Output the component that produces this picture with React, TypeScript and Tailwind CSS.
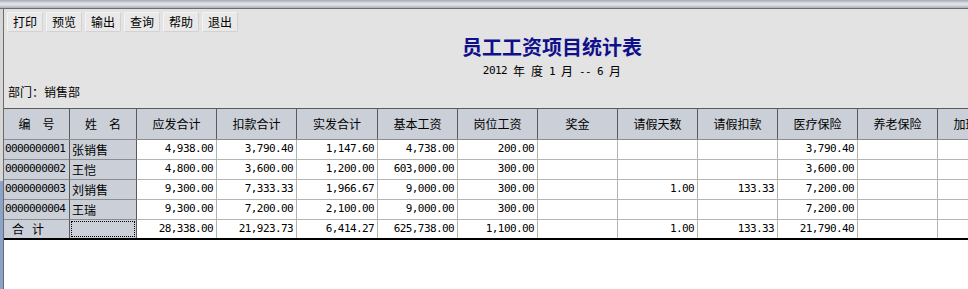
import React from "react";

const CJK = { fontFamily: '"Noto Sans CJK SC", "Noto Sans", sans-serif' };
const MONO = { fontFamily: '"DejaVu Sans Mono", "Liberation Mono", monospace' };

const widths = [66, 67, 80, 80, 81, 80, 80, 80, 80, 80, 80, 80, 80];
const headers = [
  "编\u3000号",
  "姓\u3000名",
  "应发合计",
  "扣款合计",
  "实发合计",
  "基本工资",
  "岗位工资",
  "奖金",
  "请假天数",
  "请假扣款",
  "医疗保险",
  "养老保险",
  "加班工资",
];

const rows: string[][] = [
  ["0000000001", "张销售", "4,938.00", "3,790.40", "1,147.60", "4,738.00", "200.00", "", "", "", "3,790.40", "", ""],
  ["0000000002", "王恺", "4,800.00", "3,600.00", "1,200.00", "603,000.00", "300.00", "", "", "", "3,600.00", "", ""],
  ["0000000003", "刘销售", "9,300.00", "7,333.33", "1,966.67", "9,000.00", "300.00", "", "1.00", "133.33", "7,200.00", "", ""],
  ["0000000004", "王瑞", "9,300.00", "7,200.00", "2,100.00", "9,000.00", "300.00", "", "", "", "7,200.00", "", ""],
];
const total = ["合计", "", "28,338.00", "21,923.73", "6,414.27", "625,738.00", "1,100.00", "", "1.00", "133.33", "21,790.40", "", ""];

const buttons = ["打印", "预览", "输出", "查询", "帮助", "退出"];

function Num({ v }: { v: string }) {
  return (
    <span className="text-[11px] tracking-[-0.6px] text-black" style={MONO}>
      {v}
    </span>
  );
}

export default function App() {
  return (
    <div className="w-[968px] h-[289px] overflow-hidden bg-[#e3e3e3] flex flex-col text-black">
      {/* top window edge */}
      <div className="h-[9px] shrink-0 bg-[linear-gradient(#a4a8b0,#c8ccd4_25%,#e6e9ee_50%,#c4c8d0_80%,#a8acb4)] border-b border-[#6c6c6c]" />
      <div className="flex flex-1 min-h-0">
        {/* left strip */}
        <div className="w-[3px] shrink-0 flex flex-col">
          <div className="h-[172px] bg-[#d6d6d6]" />
          <div className="flex-1 bg-[#8aa3c8]" />
        </div>
        <div className="flex-1 min-w-0 border-l border-[#6c6c6c] flex flex-col">
          {/* toolbar */}
          <div className="flex gap-[3px] pl-[3px] pt-[3px] h-[23px] shrink-0">
            {buttons.map((b) => (
              <div
                key={b}
                className="w-[36px] h-[20px] flex items-center justify-center text-[12px] bg-[#e9e9e9] border border-t-[#f4f4f4] border-l-[#f4f4f4] border-r-[#d2d2d2] border-b-[#d2d2d2] rounded-[2px]"
                style={CJK}
              >
                {b}
              </div>
            ))}
          </div>
          {/* title */}
          <div className="w-[1096px] shrink-0 mt-[3px] h-[24px] leading-[24px] text-center text-[20px] font-bold text-[#10108a] tracking-[0px]" style={CJK}>
            员工工资项目统计表
          </div>
          <div className="w-[1096px] shrink-0 mt-[2px] h-[20px] flex items-center justify-center text-[12px]" style={CJK}>
            <Num v="2012" />
            <span className="ml-[6px]">年</span>
            <span className="ml-[6px]">度</span>
            <span className="ml-[6px]"><Num v="1" /></span>
            <span className="ml-[6px]">月</span>
            <span className="ml-[6px]"><Num v="--" /></span>
            <span className="ml-[6px]"><Num v="6" /></span>
            <span className="ml-[6px]">月</span>
          </div>
          <div className="mt-[2px] h-[18px] shrink-0 flex items-center pl-[4px] text-[12px]" style={CJK}>
            部门：销售部
          </div>
          <div className="h-[7px] shrink-0" />
          {/* table */}
          <div className="flex flex-col shrink-0">
            {/* header */}
            <div className="flex h-[32px] border-t border-[#5a5a5a] border-b border-b-[#8c8c8c] bg-[#cbd0d8]">
              {headers.map((h, i) => (
                <div
                  key={i}
                  className="shrink-0 h-full flex items-center justify-center border-r border-[#5a5a5a] text-[12px] whitespace-nowrap overflow-hidden"
                  style={{ ...CJK, width: widths[i] }}
                >
                  {h}
                </div>
              ))}
            </div>
            {rows.map((r, ri) => (
              <div key={ri} className="flex h-[20px]">
                {r.map((c, ci) => {
                  if (ci === 0)
                    return (
                      <div key={ci} className="shrink-0 h-full flex items-center pl-[1px] bg-[#cbd0d8] border-r border-b border-r-[#5a5a5a] border-b-[#8c8c8c]" style={{ width: widths[ci] }}>
                        <Num v={c} />
                      </div>
                    );
                  if (ci === 1)
                    return (
                      <div key={ci} className="shrink-0 h-full flex items-center pl-[2px] bg-[#cbd0d8] border-r border-b border-r-[#5a5a5a] border-b-[#8c8c8c] text-[12px]" style={{ ...CJK, width: widths[ci] }}>
                        {c}
                      </div>
                    );
                  return (
                    <div key={ci} className="shrink-0 h-full flex items-center justify-end pr-[3px] bg-white border-r border-b border-[#b4b4b4]" style={{ width: widths[ci] }}>
                      <Num v={c} />
                    </div>
                  );
                })}
              </div>
            ))}
            {/* total */}
            <div className="flex h-[20px] border-b-2 border-black">
              {total.map((c, ci) => {
                if (ci === 0)
                  return (
                    <div key={ci} className="shrink-0 h-full flex items-center pl-[8px] bg-[#cbd0d8] border-r border-[#5a5a5a] text-[12px]" style={{ ...CJK, width: widths[ci] }}>
                      <span>合</span>
                      <span className="ml-[8px]">计</span>
                    </div>
                  );
                if (ci === 1)
                  return (
                    <div key={ci} className="shrink-0 h-full p-[1px] bg-[#cbd0d8] border-r border-[#5a5a5a]" style={{ width: widths[ci] }}>
                      <div className="w-full h-full border border-dotted border-black" />
                    </div>
                  );
                return (
                  <div key={ci} className="shrink-0 h-full flex items-center justify-end pr-[3px] bg-white border-r border-[#b4b4b4]" style={{ width: widths[ci] }}>
                    <Num v={c} />
                  </div>
                );
              })}
            </div>
          </div>
          <div className="flex-1 bg-white" />
        </div>
      </div>
    </div>
  );
}
